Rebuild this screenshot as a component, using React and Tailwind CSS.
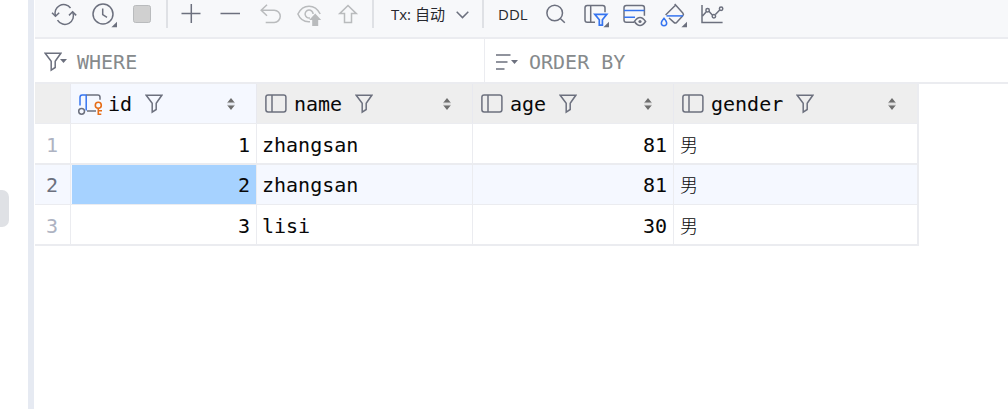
import clsx from "clsx";

const GRAY = "#6c707e";
const BLUE = "#3574f0";
const DISABLED = "#b9bbbd";

const columns = [
    { name: "id", selected: true, primary: true },
    { name: "name" },
    { name: "age" },
    { name: "gender", last: true },
];

const rows = [
    { id: 1, name: "zhangsan", age: 81, gender: "男" },
    { id: 2, name: "zhangsan", age: 81, gender: "男", selected: true },
    { id: 3, name: "lisi", age: 30, gender: "男" },
];

function ToolIcon({ color = GRAY, children })
{
    return (
        <svg width="39" height="30" viewBox="0 0 39 30" fill="none" stroke={color} strokeWidth="1.5" className="shrink-0">
            {children}
        </svg>
    );
}

// little corner mark for buttons which open a menu
function Corner()
{
    return <path d="M33 21.8v5.4h-5.6z" fill={GRAY} stroke="none" />;
}

function Funnel()
{
    return (
        <svg width="18" height="20" viewBox="0 0 18 20" fill="none" stroke={GRAY} strokeWidth="1.5" strokeLinejoin="miter" className="shrink-0">
            <path d="M1.2 1.3h15.6l-5.6 7.9v6.3l-4 2.6V9.2z" />
        </svg>
    );
}

function DropMark()
{
    return (
        <svg width="7" height="4" viewBox="0 0 7 4" className="shrink-0">
            <path d="M0 0h7L3.5 4z" fill={GRAY} />
        </svg>
    );
}

function SortMark()
{
    return (
        <svg width="8" height="12" viewBox="0 0 8 12" fill="#6e6e6e" className="shrink-0">
            <path d="M4 0l3.6 4.5H.4zM4 12l3.6-4.5H.4z" />
            <path d="M0 4.5h8v.8H0zM0 6.8h8v.8H0z" opacity=".35" />
        </svg>
    );
}

function ColumnIcon()
{
    return (
        <svg width="22" height="19" viewBox="0 0 22 19" fill="none" stroke={GRAY} strokeWidth="1.5" className="shrink-0">
            <rect x=".9" y=".9" width="20" height="17" rx="2.2" />
            <path d="M7 1v17" />
        </svg>
    );
}

function KeyColumnIcon()
{
    return (
        <svg width="25" height="22" viewBox="0 0 25 22" fill="none" strokeWidth="1.5" className="shrink-0">
            <path d="M2 11.5V3.3Q2 1 4.2 1h4v15.5" stroke={BLUE} />
            <path d="M8.5 1h11.3Q22 1 22 3.2v2.6M9 17h9" stroke={GRAY} />
            <circle cx="3.6" cy="17.3" r="2.9" stroke={GRAY} />
            <circle cx="20.3" cy="11.3" r="3" stroke="#e66d17" strokeWidth="1.6" />
            <path d="M20.3 14.3v6.7M20.3 16.8h3.7M20.3 20.2h3" stroke="#e66d17" strokeWidth="1.6" />
        </svg>
    );
}

function Divider({ className })
{
    return <div className={clsx("h-7 w-0.5 shrink-0 bg-[#dfe1e5]", className)} />;
}

function Toolbar()
{
    return (
        <div className="flex h-[39px] shrink-0 items-start border-b-2 border-[#ebecf0] bg-[#f7f8fa] pl-2.5 font-['Open_Sans','Noto_Sans_CJK_SC',sans-serif] text-[15px] leading-[29px] text-[#27282e]">
            <ToolIcon>
                <path d="M10.5 16A8.6 8.6 0 0 1 25.5 8M27.6 12A8.6 8.6 0 0 1 12.5 20.2" />
                <path d="M7 12.8l3.5 3.5 3.7-3.5M24 15.4l3.6-3.6 3.6 3.6" />
            </ToolIcon>
            <ToolIcon>
                <circle cx="19" cy="14" r="10" />
                <path d="M18.7 8.5v6.2l4.3 2.6" />
                <Corner />
            </ToolIcon>
            <ToolIcon color="#b9bbbd">
                <rect x="10.5" y="5.5" width="17" height="17" rx="2" fill="#d0d0d0" strokeWidth="1" />
            </ToolIcon>
            <Divider className="ml-1 mr-[3px]" />
            <ToolIcon><path d="M10.5 13.5h19M20.3 4v19" /></ToolIcon>
            <ToolIcon><path d="M10.5 13.5h19.5" /></ToolIcon>
            <ToolIcon color={DISABLED}>
                <path d="M18 4.8l-5.8 5.5 5.8 5.5M12.5 10.3h12.7a6 6 0 0 1 0 12.1h-8.5" />
            </ToolIcon>
            <ToolIcon color={DISABLED}>
                <path d="M22 21.7C15.5 22.3 11.8 18.5 9.9 14 15 3.6 27 3.6 32.2 14" />
                <path d="M22 18a4 4 0 1 1 3.1-4" />
                <path d="M27.2 13.5l6 6.5h-3v6h-6v-6h-3z" fill={DISABLED} stroke="none" />
            </ToolIcon>
            <ToolIcon color={DISABLED}><path d="M21 5.5l8.3 8.1h-4.8v9h-7v-9h-4.8z" /></ToolIcon>
            <Divider className="ml-1.5" />
            <span className="ml-[17px] w-[65px] shrink-0 whitespace-nowrap">Tx: 自动</span>
            <svg width="13" height="30" viewBox="0 0 13 30" fill="none" stroke={GRAY} strokeWidth="1.5" className="shrink-0">
                <path d="M.7 11.8l5.8 5.8 5.8-5.8" />
            </svg>
            <Divider className="ml-[13px]" />
            <span className="ml-[14px] w-[39px] shrink-0">DDL</span>
            <ToolIcon>
                <circle cx="17.7" cy="13" r="7.8" />
                <path d="M23 18.3l4.8 4.5" />
            </ToolIcon>
            <ToolIcon>
                <path d="M19 22.3h-7.7Q9 22.3 9 20V7.8Q9 5.5 11.3 5.5h15.4Q29 5.5 29 7.8v4.5M14.7 5.5v16.8" />
                <path d="M18.8 14.3h12l-4.4 5.4v5.5h-3.1v-5.5z" stroke={BLUE} strokeWidth="1.7" />
                <Corner />
            </ToolIcon>
            <ToolIcon>
                <path d="M19 22.3h-7.7Q9 22.3 9 20V7.8Q9 5.5 11.3 5.5h15.8q2.3 0 2.3 2.3v8" />
                <path d="M9 10.4h20.4M9 17.2h11" stroke={BLUE} />
                <path d="M19.4 21.5q5.6-8 11.2 0-5.6 8-11.2 0z" />
                <circle cx="25" cy="21.5" r="1.6" fill={GRAY} stroke="none" />
            </ToolIcon>
            <ToolIcon>
                <path d="M20.7 4l8.1 9q1.3 1.4 0 2.8l-6.2 6.6q-1.3 1.4-2.7 0L15 18M11.6 15l9.6-9.5" />
                <path d="M12.5 15.9h16.5" stroke={BLUE} />
                <path d="M10 18.3q-2.7 3.2-2.7 4.7a2.7 2.7 0 0 0 5.4 0q0-1.5-2.7-4.7z" stroke={BLUE} />
                <Corner />
            </ToolIcon>
            <ToolIcon>
                <path d="M9 5v17.4h20.6M9.5 16l3.8-4.3M15.9 11.3l3.4 3.8M22.4 14.5l4.3-4.5" />
                <circle cx="14.6" cy="10.2" r="1.7" />
                <circle cx="20.9" cy="16.2" r="1.7" />
                <circle cx="28.1" cy="8.8" r="1.7" />
            </ToolIcon>
        </div>
    );
}

function FilterBar()
{
    return (
        <div className="flex h-[45px] shrink-0 border-b-2 border-[#ebecf0] leading-[43px] text-[#868a8c]">
            <div className="flex w-[450px] shrink-0 items-center border-r border-[#ebecf0] pl-[9px]">
                <div className="mt-0.5 flex">
                    <Funnel />
                </div>
                <div className="-ml-0.5">
                    <DropMark />
                </div>
                <span className="ml-[10px] pt-[3px]">WHERE</span>
            </div>
            <div className="flex items-center pl-[11px]">
                <svg width="15" height="18" viewBox="0 0 15 18" stroke={GRAY} strokeWidth="1.5" className="mt-0.5">
                    <path d="M0 2h14.5M0 9h11.5M0 16h8.5" />
                </svg>
                <div className="mt-0.5">
                    <DropMark />
                </div>
                <span className="ml-[11px] pt-[3px]">ORDER BY</span>
            </div>
        </div>
    );
}

function HeaderCell({ column })
{
    return (
        <div
            className={clsx(
                "flex items-center border-[#e8e9ef]",
                column.last ? "pr-[21px]" : "border-r pr-[21px]",
                column.selected ? "bg-[#f5f8ff]" : "bg-[#eeeeee]",
                column.primary ? "pl-[7px]" : "pl-2"
            )}
        >
            {column.primary ? <div className="mt-[3px]"><KeyColumnIcon /></div> : <ColumnIcon />}
            <span className={column.primary ? "ml-[5px]" : "ml-[7px]"}>{column.name}</span>
            <div className="ml-[13px] mt-px mr-auto">
                <Funnel />
            </div>
            <SortMark />
        </div>
    );
}

const gridCols = "grid grid-cols-[36px_186px_216px_201px_243px]";

function DataTable()
{
    return (
        <div className="w-[884px] border-r-2 border-b-2 border-[#ebecf0]">
            <div className={clsx(gridCols, "h-10 border-b border-[#ebecf0]")}>
                <div className="border-r border-[#e8e9ef] bg-[#eeeeee]" />
                {columns.map((column) => <HeaderCell key={column.name} column={column} />)}
            </div>
            {rows.map((row, i) => (
                <div
                    key={row.id}
                    className={clsx(
                        gridCols,
                        "grid-rows-[39px] border-[#ebecf0]",
                        row.selected ? "bg-[#f5f8ff] leading-[41px]" : "leading-[43px]",
                        i === 0 && "h-[41px] border-b-2",
                        i === 1 && "h-10 border-b",
                        i === 2 && "h-[39px]"
                    )}
                >
                    <div className={clsx("border-r border-[#ebecf0] pr-px text-center", row.selected ? "text-[#6c707e]" : "text-[#aeb3c2]")}>{row.id}</div>
                    <div className={clsx("border-r border-[#ebecf0] pr-1.5 text-right", row.selected && "border-l border-l-[#f5f8ff] bg-[#a6d2ff]")}>{row.id}</div>
                    <div className="border-r border-[#ebecf0] pl-[5px]">{row.name}</div>
                    <div className="border-r border-[#ebecf0] pr-1.5 text-right">{row.age}</div>
                    <div className="-mt-px pl-1.5 font-['Noto_Sans_CJK_SC',sans-serif] text-[18px] font-light">{row.gender}</div>
                </div>
            ))}
        </div>
    );
}

export default function App()
{
    return (
        <div className="flex h-[409px] w-[1008px] overflow-hidden bg-white">
            <div className="w-7 shrink-0 pt-[190px]">
                <div className="h-[37px] w-[9px] rounded-r-[7px] bg-[#dfe1e5]" />
            </div>
            <div className="mr-px w-1.5 shrink-0 bg-[#e6eaf2]" />
            <div className="flex min-w-0 flex-1 flex-col font-['DejaVu_Sans_Mono',monospace] text-[20px] text-[#080808]">
                <Toolbar />
                <FilterBar />
                <DataTable />
            </div>
        </div>
    );
}
